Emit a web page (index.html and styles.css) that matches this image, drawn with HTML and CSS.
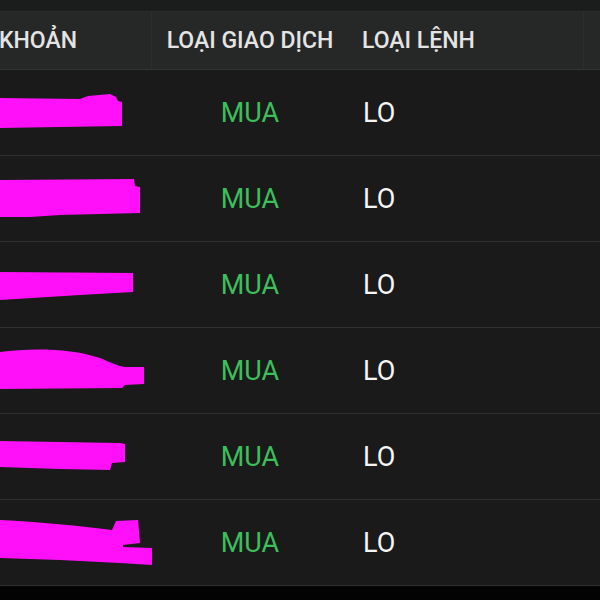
FILE: index.html
```html
<!DOCTYPE html>
<html lang="vi">
<head>
  <meta charset="UTF-8">
  <meta name="viewport" content="width=device-width, initial-scale=1.0">
  <title>Sổ lệnh</title>
  <link rel="stylesheet" href="styles.css">
</head>
<body>

<div class="top-bar"></div>

<section class="order-table">
  <div class="row header">
    <div class="cell account"><span>SỐ TÀI KHOẢN</span></div>
    <div class="cell side">LOẠI GIAO DỊCH</div>
    <div class="cell type">LOẠI LỆNH</div>
  </div>

  <div class="row">
    <div class="cell account">
      <svg width="152" height="85" viewBox="0 0 152 85"><path d="M0,28 L80,29 L88,26 L110,24 L116,27 L118,31 L122,32 L122,56 L60,57 L0,58 Z"/></svg>
    </div>
    <div class="cell side buy">MUA</div>
    <div class="cell type">LO</div>
  </div>

  <div class="row">
    <div class="cell account">
      <svg width="152" height="85" viewBox="0 0 152 85"><path d="M0,24 L134,23 L135,30 L140,31 L140,57 L60,59 L30,61 L0,61 Z"/></svg>
    </div>
    <div class="cell side buy">MUA</div>
    <div class="cell type">LO</div>
  </div>

  <div class="row">
    <div class="cell account">
      <svg width="152" height="85" viewBox="0 0 152 85"><path d="M0,30 L133,31 L133,50 L80,53 L0,58 Z"/></svg>
    </div>
    <div class="cell side buy">MUA</div>
    <div class="cell type">LO</div>
  </div>

  <div class="row">
    <div class="cell account">
      <svg width="152" height="85" viewBox="0 0 152 85"><path d="M0,24 C30,20 70,20 100,30 C112,35 118,38 125,39 L144,39 L144,56 L125,57 L122,60 L0,61 Z"/></svg>
    </div>
    <div class="cell side buy">MUA</div>
    <div class="cell type">LO</div>
  </div>

  <div class="row">
    <div class="cell account">
      <svg width="152" height="85" viewBox="0 0 152 85"><path d="M0,27 L120,29 L125,30 L125,48 L112,49 L110,56 L60,55 L0,53 Z"/></svg>
    </div>
    <div class="cell side buy">MUA</div>
    <div class="cell type">LO</div>
  </div>

  <div class="row">
    <div class="cell account">
      <svg width="152" height="85" viewBox="0 0 152 85"><path d="M0,20 C40,22 80,26 112,30 L116,21 L138,20 L140,43 L123,45 L123,47 L153,48 L153,65 L120,63 L60,60 L0,58 Z"/></svg>
    </div>
    <div class="cell side buy">MUA</div>
    <div class="cell type">LO</div>
  </div>
</section>

</body>
</html>
```

FILE: styles.css
```css
body {
  margin: 0;
  padding: 0;
  background-color: #030303;
  font-family: Roboto, "Liberation Sans", sans-serif;
  color: #f5f5f5;
  height: 600px;
  overflow: hidden;
}

.top-bar {
  height: 11px;
  background-color: #1b1c1c;
  border-bottom: 1px solid #2b2c2c;
}

.row {
  display: grid;
  grid-template-columns: 152px 196px 1fr;
  height: 85px;
  align-items: center;
  background-color: #1a1a1a;
  border-bottom: 1px solid #303030;
  font-size: 27px;
}

.row.header {
  height: 57px;
  background-color: #262727;
  border-bottom: 1px solid #323333;
  font-size: 23px;
  font-weight: 500;
  color: #e4e4e4;
}

.cell {
  white-space: nowrap;
}

.header .cell {
  height: 100%;
  display: flex;
  align-items: center;
}

.header .account {
  justify-content: flex-end;
  overflow: hidden;
  padding-right: 74px;
  border-right: 1px solid #2c2d2d;
  box-sizing: border-box;
}

.header .side {
  justify-content: center;
}

.header .type {
  padding-left: 14px;
  border-right: 1px solid #2c2d2d;
  margin-right: 16px;
}

.account svg {
  display: block;
  fill: #ff10f8;
}

.row .account {
  height: 100%;
}

.side {
  text-align: center;
}

.side.buy {
  color: #3cbf5c;
}

.type {
  padding-left: 15px;
}
```
